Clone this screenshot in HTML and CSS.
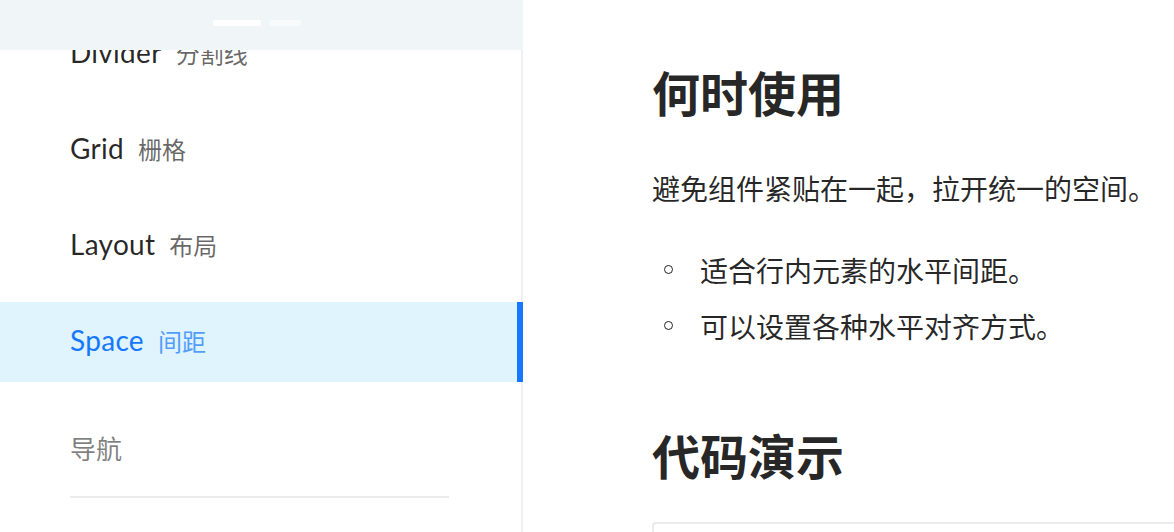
FILE: index.html
```html
<!DOCTYPE html>
<html lang="zh">
<head>
<meta charset="utf-8">
<title>Space 间距</title>
<link rel="stylesheet" href="styles.css">
</head>
<body>
<div class="page">
  <aside class="sidebar">
    <div class="handle-bar">
      <span class="pill pill-main"></span>
      <span class="pill pill-faint"></span>
    </div>
    <ul class="menu">
      <li class="menu-item"><span class="en">Divider</span><span class="zh">分割线</span></li>
      <li class="menu-item"><span class="en">Grid</span><span class="zh">栅格</span></li>
      <li class="menu-item"><span class="en">Layout</span><span class="zh">布局</span></li>
      <li class="menu-item active"><span class="en">Space</span><span class="zh">间距</span></li>
    </ul>
    <div class="group-title">导航</div>
    <div class="group-divider"></div>
  </aside>
  <main class="content">
    <h2 class="heading">何时使用</h2>
    <p class="para">避免组件紧贴在一起，拉开统一的空间。</p>
    <ul class="bullets">
      <li>适合行内元素的水平间距。</li>
      <li>可以设置各种水平对齐方式。</li>
    </ul>
    <h2 class="heading heading-2">代码演示</h2>
    <div class="code-box"></div>
  </main>
</div>
</body>
</html>
```

FILE: styles.css
```css
html, body {
  margin: 0;
  padding: 0;
  background: #ffffff;
  height: 100%;
  overflow: hidden;
}

body {
  font-family: Lato, "Noto Sans CJK SC", sans-serif;
  color: rgba(0, 0, 0, 0.85);
}

.page {
  display: flex;
  height: 532px;
  overflow: hidden;
}

.sidebar {
  position: relative;
  width: 521px;
  flex: 0 0 521px;
  border-right: 2px solid #f0f0f0;
  box-sizing: content-box;
}

.handle-bar {
  position: absolute;
  top: 0;
  left: 0;
  right: -2px;
  height: 50px;
  background: #f0f5f8;
  display: flex;
  justify-content: flex-start;
  align-items: flex-start;
  gap: 8px;
  padding: 20px 0 0 213px;
  box-sizing: border-box;
  z-index: 2;
}

.pill {
  display: block;
  height: 6px;
  border-radius: 2px;
}

.pill-main {
  width: 48px;
  background: #ffffff;
}

.pill-faint {
  width: 32px;
  background: rgba(255, 255, 255, 0.55);
}

.menu {
  list-style: none;
  margin: 0;
  padding: 14px 0 0 0;
  display: flex;
  flex-direction: column;
  gap: 16px;
}

.menu-item {
  position: relative;
  height: 80px;
  display: flex;
  align-items: center;
  padding-left: 70px;
  padding-bottom: 4px;
  box-sizing: border-box;
  margin-right: -2px;
  font-size: 28px;
  color: rgba(0, 0, 0, 0.85);
}

.menu-item .en {
  letter-spacing: 0.3px;
}

.menu-item .zh {
  font-family: "Noto Sans CJK SC", sans-serif;
  font-size: 24px;
  margin-left: 14px;
  color: rgba(0, 0, 0, 0.6);
}

.menu-item.active {
  background: #dff4fd;
  color: #1677ff;
}

.menu-item.active .zh {
  color: #1677ff;
  opacity: 0.7;
}

.menu-item.active::after {
  content: "";
  position: absolute;
  top: 0;
  right: 0;
  width: 6px;
  height: 80px;
  background: #1677ff;
}

.group-title {
  margin-top: 48px;
  padding-left: 70px;
  font-family: "Noto Sans CJK SC", sans-serif;
  font-size: 26px;
  line-height: 36px;
  color: rgba(0, 0, 0, 0.5);
}

.group-divider {
  margin: 30px 0 0 70px;
  width: 379px;
  height: 2px;
  background: #ebebeb;
}

.content {
  flex: 1;
  padding: 59px 0 0 129px;
  font-family: "Noto Sans CJK SC", sans-serif;
  min-width: 0;
}

.heading {
  margin: 0;
  font-size: 48px;
  line-height: 64px;
  font-weight: 700;
  color: rgba(0, 0, 0, 0.85);
  white-space: nowrap;
}

.para {
  margin: 37px 0 0 0;
  font-size: 28px;
  line-height: 56px;
  white-space: nowrap;
  color: rgba(0, 0, 0, 0.85);
}

.bullets {
  margin: 26px 0 0 0;
  padding: 0 0 0 48px;
  list-style: none;
  font-size: 28px;
  line-height: 56px;
  white-space: nowrap;
}

.bullets li {
  position: relative;
}

.bullets li::before {
  content: "";
  position: absolute;
  left: -36px;
  top: 23px;
  width: 7px;
  height: 7px;
  border: 1.5px solid rgba(0, 0, 0, 0.85);
  border-radius: 50%;
}

.heading-2 {
  margin-top: 68px;
}

.code-box {
  margin-top: 36px;
  height: 60px;
  border: 2px solid #ebebeb;
  border-right: none;
  border-radius: 4px 0 0 0;
}
```
